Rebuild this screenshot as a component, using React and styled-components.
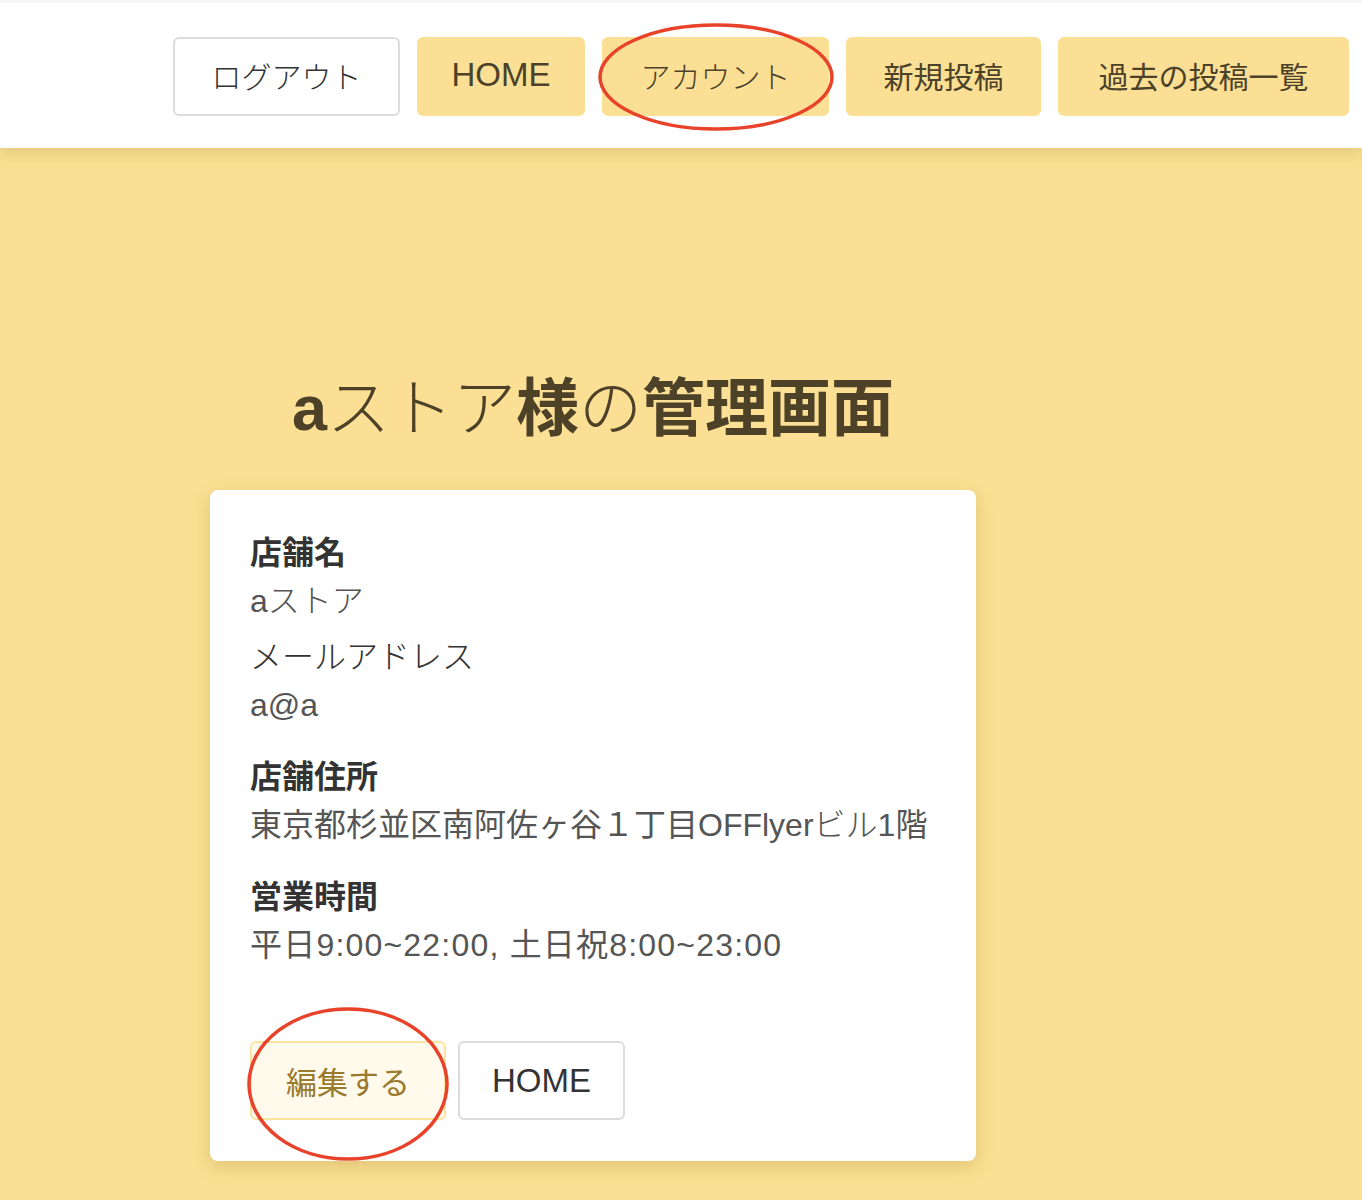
import styled, { createGlobalStyle } from "styled-components";

const GlobalStyle = createGlobalStyle`
  html, body {
    margin: 0;
    padding: 0;
    background: #fadf94;
  }
  body {
    font-family: "Liberation Sans", "Noto Sans CJK JP", sans-serif;
    color: #4c4129;
  }
`;

const Header = styled.header`
  position: relative;
  z-index: 1;
  height: 148px;
  box-sizing: border-box;
  background: #fff;
  border-top: 3px solid #f7f7f7;
  box-shadow: 0 6px 14px rgba(170, 140, 60, 0.25);
  display: flex;
  justify-content: flex-end;
  align-items: flex-start;
  gap: 17px;
  padding: 34px 13px 0 0;
`;

const NavButton = styled.button`
  position: relative;
  height: 79px;
  box-sizing: border-box;
  padding: 0 ${(p) => p.$pad || 36}px 3px;
  font-family: "Liberation Sans", "Noto Sans CJK JP", sans-serif;
  font-size: ${(p) => (p.$latin ? 33 : 30)}px;
  font-weight: 400;
  color: ${(p) => (p.$outline ? "#333" : "#4c4129")};
  background: ${(p) => (p.$outline ? "#fff" : "#fbdf94")};
  border: ${(p) => (p.$outline ? "2px solid #dcdcdc" : "2px solid #fbdf94")};
  border-radius: 6px;
  cursor: pointer;
`;

// katakana in the reference renders in a thinner face
const Kana = styled.span`
  font-weight: 300;
`;

const Ring = styled.svg`
  position: absolute;
  pointer-events: none;
  overflow: visible;
  left: ${(p) => p.$left}px;
  top: ${(p) => p.$top}px;
`;

const Main = styled.main`
  padding: 225px 0 38px 210px;
`;

const Column = styled.div`
  width: 766px;
  display: flex;
  flex-direction: column;
  align-items: center;
`;

const Title = styled.h1`
  margin: 0 0 45px;
  font-family: "Liberation Sans", "Noto Sans CJK JP", sans-serif;
  font-size: 63px;
  line-height: 70px;
  font-weight: 700;
  color: #4d4128;
  padding-bottom: 2px;
`;

const Card = styled.section`
  align-self: stretch;
  background: #fff;
  border-radius: 8px;
  box-shadow: 0 6px 18px rgba(170, 135, 50, 0.3);
  padding: 39px 40px 41px;
`;

const Field = styled.div`
  margin-bottom: ${(p) => p.$gap}px;
`;

const Label = styled.div`
  font-size: 32px;
  line-height: 48px;
  font-weight: ${(p) => (p.$light ? 400 : 700)};
  color: #333;
`;

const Value = styled.div`
  font-size: 32px;
  line-height: 48px;
  color: #555;
  white-space: nowrap;
  letter-spacing: ${(p) => p.$track || 0}px;
`;

const Actions = styled.div`
  margin-top: 72px;
  display: flex;
  gap: 12px;
`;

const CardButton = styled.button`
  position: relative;
  height: 79px;
  box-sizing: border-box;
  padding: 0 ${(p) => p.$pad}px;
  font-family: "Liberation Sans", "Noto Sans CJK JP", sans-serif;
  font-size: ${(p) => (p.$soft ? 31 : 33)}px;
  color: ${(p) => (p.$soft ? "#9a7a2c" : "#333")};
  background: ${(p) => (p.$soft ? "#fffaec" : "#fff")};
  border: 2px solid ${(p) => (p.$soft ? "#fbe3a0" : "#dcdcdc")};
  border-radius: 6px;
  cursor: pointer;
`;

const RedRing = ({ left, top, rx, ry }) => (
  <Ring $left={left} $top={top} width={rx * 2} height={ry * 2}>
    <ellipse cx={rx} cy={ry} rx={rx - 2} ry={ry - 2} fill="none" stroke="#e8432a" strokeWidth="3.5" />
  </Ring>
);

const fields = [
  { label: "店舗名", value: <>a<Kana>ストア</Kana></>, gap: 8 },
  { label: <Kana>メールアドレス</Kana>, value: "a@a", gap: 24, light: true },
  { label: "店舗住所", value: <>東京都杉並区南阿佐ヶ谷１丁目OFFlyer<Kana>ビル</Kana>1階</>, gap: 24 },
  { label: "営業時間", value: "平日9:00~22:00, 土日祝8:00~23:00", gap: 0, track: 1.2 },
];

export default function App() {
  return (
    <>
      <GlobalStyle />
      <Header>
        <NavButton $outline $pad={36.5}><Kana>ログアウト</Kana></NavButton>
        <NavButton $latin $pad={32.5}>HOME</NavButton>
        <NavButton $pad={36.5}>
          <Kana>アカウント</Kana>
          <RedRing left={-6} top={-16} rx={118} ry={54} />
        </NavButton>
        <NavButton $pad={35.5}>新規投稿</NavButton>
        <NavButton $pad={38.5}>過去の投稿一覧</NavButton>
      </Header>
      <Main>
        <Column>
          <Title>
            a<Kana>ストア</Kana>様<Kana>の</Kana>管理画面
          </Title>
          <Card>
            {fields.map((f, i) => (
              <Field key={i} $gap={f.gap}>
                <Label $light={f.light}>{f.label}</Label>
                <Value $track={f.track}>{f.value}</Value>
              </Field>
            ))}
            <Actions>
              <CardButton $soft $pad={34}>
                編集する
                <RedRing left={-5} top={-36} rx={101} ry={77} />
              </CardButton>
              <CardButton $pad={32}>HOME</CardButton>
            </Actions>
          </Card>
        </Column>
      </Main>
    </>
  );
}
